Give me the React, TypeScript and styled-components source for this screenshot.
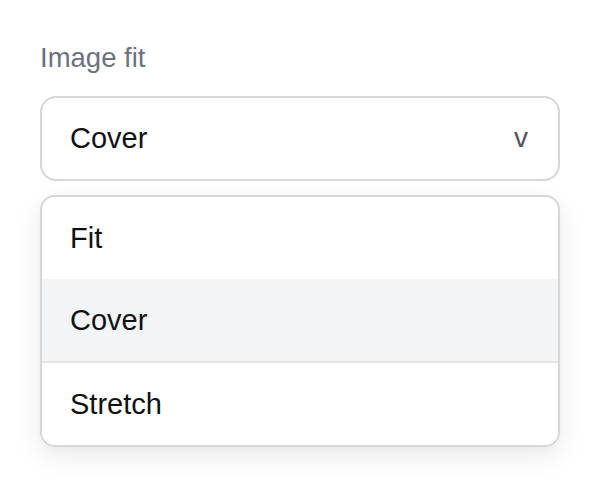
import React from 'react';
import styled, { createGlobalStyle } from 'styled-components';

const GlobalStyle = createGlobalStyle`
  html, body {
    margin: 0;
    padding: 0;
    background: #ffffff;
  }
  body {
    font-family: "Liberation Sans", Arial, sans-serif;
    -webkit-font-smoothing: antialiased;
  }
`;

const Page = styled.div`
  width: 600px;
  height: 488px;
  box-sizing: border-box;
  padding: 42px 40px 0;
  display: flex;
  flex-direction: column;
`;

const Label = styled.div`
  font-size: 27.5px;
  line-height: 31px;
  color: #6b7280;
  margin-bottom: 23px;
`;

const SelectBox = styled.div`
  height: 85px;
  box-sizing: border-box;
  border: 2px solid #d6d7db;
  border-radius: 16px;
  display: flex;
  align-items: center;
  justify-content: space-between;
  padding: 0 30px 0 28px;
  background: #fff;
`;

const Value = styled.span`
  font-size: 29px;
  color: #111114;
`;

const Chevron = styled.span`
  font-size: 28px;
  color: #52525b;
  line-height: 1;
  margin-top: -2px;
`;

const Menu = styled.div`
  margin-top: 14px;
  border: 2px solid #d6d7db;
  border-radius: 15px;
  background: #fff;
  overflow: hidden;
  box-shadow: 0 10px 28px rgba(0, 0, 0, 0.08), 0 2px 6px rgba(0, 0, 0, 0.04);
`;

const Option = styled.div<{ $active?: boolean }>`
  height: 82px;
  display: flex;
  align-items: center;
  padding: 0 28px;
  font-size: 29px;
  color: #111114;
  background: ${(p) => (p.$active ? '#f3f4f6' : '#fff')};
  border-bottom: ${(p) => (p.$active ? '2px solid #e4e5e8' : 'none')};
`;

const options = ['Fit', 'Cover', 'Stretch'];

const App = () => {
  const selected = 'Cover';
  return (
    <>
      <GlobalStyle />
      <Page>
        <Label>Image fit</Label>
        <SelectBox>
          <Value>{selected}</Value>
          <Chevron>v</Chevron>
        </SelectBox>
        <Menu>
          {options.map((o) => (
            <Option key={o} $active={o === selected}>
              {o}
            </Option>
          ))}
        </Menu>
      </Page>
    </>
  );
};

export default App;
